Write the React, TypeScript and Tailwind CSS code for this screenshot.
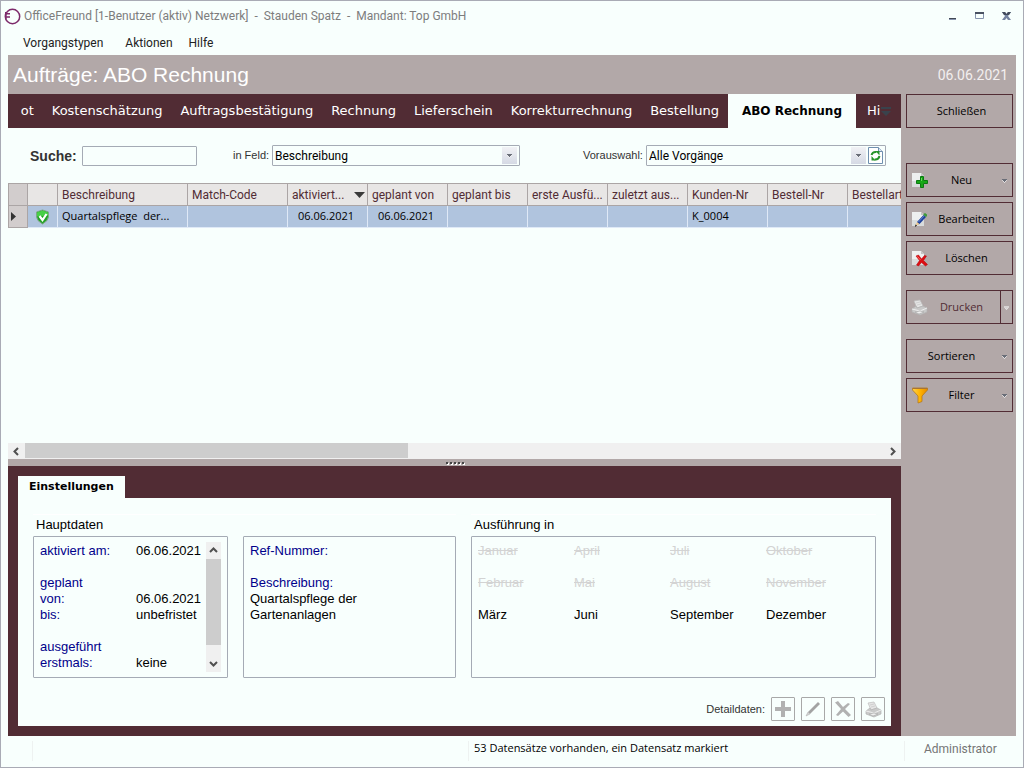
import { useState, type ReactNode } from "react";
import clsx from "clsx";

const tabs = [
  { name: "Angebot", label: "ot" },
  { name: "Kostenschätzung" },
  { name: "Auftragsbestätigung" },
  { name: "Rechnung" },
  { name: "Lieferschein" },
  { name: "Korrekturrechnung" },
  { name: "Bestellung" },
  { name: "ABO Rechnung" },
];

const columns = [
  { label: "Beschreibung", value: "Quartalspflege\u00a0 der..." },
  { label: "Match-Code", value: "" },
  { label: "aktiviert...", value: "06.06.2021", date: true, sorted: true },
  { label: "geplant von", value: "06.06.2021", date: true },
  { label: "geplant bis", value: "" },
  { label: "erste Ausfü...", value: "" },
  { label: "zuletzt aus...", value: "" },
  { label: "Kunden-Nr", value: "K_0004" },
  { label: "Bestell-Nr", value: "" },
  { label: "Bestellart", value: "" },
];

const months = [
  { name: "Januar", active: false },
  { name: "April", active: false },
  { name: "Juli", active: false },
  { name: "Oktober", active: false },
  { name: "Februar", active: false },
  { name: "Mai", active: false },
  { name: "August", active: false },
  { name: "November", active: false },
  { name: "März", active: true },
  { name: "Juni", active: true },
  { name: "September", active: true },
  { name: "Dezember", active: true },
];

const mainData = [
  ["aktiviert am:", "06.06.2021"],
  ["", ""],
  ["geplant", ""],
  ["von:", "06.06.2021"],
  ["bis:", "unbefristet"],
  ["", ""],
  ["ausgeführt", ""],
  ["erstmals:", "keine"],
];

const Logo = () => (
  <svg width="17" height="17" viewBox="0 0 17 17" fill="none" stroke="#7d2a6b">
    <circle cx="8.5" cy="8.5" r="7.2" strokeWidth="1.5" />
    <path d="M1 5.8h5M1 9h5" strokeWidth="1.4" />
    <path d="M1.8 4v7" strokeWidth="1.6" />
  </svg>
);

const Arrow = ({ className = "text-[#6a6e78]" }: { className?: string }) => (
  <svg width="7" height="5" viewBox="0 0 7 5" className={className}>
    <path d="M1 2h5L3.500 5z" fill="#f4f4f4" />
    <path d="M1 1h5v1H5v1H4v1H3V3H2V2H1z" fill="currentColor" />
  </svg>
);

const Page = () => (
  <>
    <path d="M1 1h9l3 3v11H1z" fill="#eef0f0" />
    <path d="M1 9h12v6H1z" fill="#d9dcdc" />
    <path d="M10 1v3h3z" fill="#c4c4c4" />
  </>
);

const NewIcon = () => (
  <svg width="17" height="17" viewBox="0 0 17 17">
    <Page />
    <path d="M9.500 4.500h3v4h4v3h-4v4h-3v-4h-4v-3h4z" fill="#17a817" stroke="#0b7a10" />
    <path d="M10 6h1v3h-1z" fill="#63dd55" />
  </svg>
);

const EditIcon = () => (
  <svg width="17" height="17" viewBox="0 0 17 17">
    <Page />
    <path d="M6 11l6.500-7 2.500 2-6.500 7-2 .5z" fill="#1d3f9b" />
    <path d="M7.500 11l6-6.500" stroke="#7798e0" strokeWidth=".8" />
    <path d="M12.500 3l1.500-1 2 1.500v1.500l-1 1-2.500-2z" fill="#3d9a3b" />
    <path d="M6 11l2.500 2-4 2z" fill="#efc88d" />
    <path d="M4.500 13.500l1.500 1-2 1.500z" fill="#111" />
  </svg>
);

const DeleteIcon = () => (
  <svg width="17" height="17" viewBox="0 0 17 17">
    <Page />
    <path
      d="M5 6l2.500-1 3 4 3-3.500 2 .5-3 4.500 4 4-2 1.500-4-3.500-3 3.500-2-1 3-4.500z"
      fill="#dd0d12"
      stroke="#b00008"
      strokeWidth=".5"
    />
    <path d="M6.500 6.500l3 3.500" stroke="#ff6a62" />
  </svg>
);

const PrinterIcon = () => (
  <svg width="17" height="17" viewBox="0 0 17 17">
    <path d="M3 2l6-1 3 6-6 2z" fill="#e5e5e5" stroke="#bdbdbd" strokeWidth=".7" />
    <path d="M5 4l4-1M6 6l4-1" stroke="#c5c5c5" strokeWidth=".7" />
    <path d="M1 10l4-3 1 2 6-2 4 2v4l-7 3-8-3z" fill="#c9c9c9" stroke="#b3b3b3" strokeWidth=".7" />
    <path d="M1 10l8 2 7-3" stroke="#eee" fill="none" />
    <path d="M4 13l5-1 4 1-5 2z" fill="#efefef" stroke="#a2a2a2" strokeWidth=".6" />
  </svg>
);

const FilterIcon = () => (
  <svg width="18" height="18" viewBox="0 0 18 18">
    <defs>
      <linearGradient id="funnel">
        <stop offset="0" stopColor="#ffd34a" />
        <stop offset=".5" stopColor="#ffb300" />
        <stop offset="1" stopColor="#e58a00" />
      </linearGradient>
    </defs>
    <path
      d="M1.500 2h15v2L11 10v5.500L7 17v-7L1.500 4z"
      fill="url(#funnel)"
      stroke="#b67a1a"
      strokeWidth=".8"
    />
    <path d="M2 2.500h14" stroke="#a87435" />
  </svg>
);

const ShieldIcon = () => (
  <svg width="15" height="16" viewBox="0 0 15 16">
    <path d="M7.500 1l6 2v4.500q0 4-6 7.500-6-3.500-6-7.500V3z" fill="#21a424" stroke="#7fa588" />
    <path d="M7.500 1.500l5.500 2v3l-11 1v-4z" fill="#48cf48" />
    <path d="M4.500 7l3 4 4-6" fill="none" stroke="#fff" strokeWidth="2.200" />
  </svg>
);

const RefreshIcon = () => (
  <svg width="15" height="17" viewBox="0 0 15 17">
    <path d="M.5.5h10l4 4v12H.5z" fill="#fff" stroke="#6f8fae" />
    <path d="M10.500.5v4h4" fill="#dce6ef" stroke="#6f8fae" />
    <path d="M3.500 8q1-3.500 5-3M11.500 9q-1 4-5 3.500" fill="none" stroke="#259329" strokeWidth="2" />
    <path d="M7.500 4h4v4.500zM7.500 13.500h-4V9z" fill="#259329" />
  </svg>
);

const Chevron = ({ d }: { d: string }) => (
  <svg width="9" height="9" viewBox="0 0 9 9" fill="none" stroke="#505050" strokeWidth="2">
    <path d={d} />
  </svg>
);

type SideButtonProps = {
  label: string;
  icon?: ReactNode;
  arrow?: boolean;
  className?: string;
};

const SideButton = ({ label, icon, arrow, className }: SideButtonProps) => (
  <button
    className={clsx(
      "flex h-[34px] w-full shrink-0 items-center border border-[#512c34] pl-1",
      className
    )}
  >
    {icon && <span className="w-5">{icon}</span>}
    <span className="flex-1 text-center">{label}</span>
    {arrow && (
      <span className="flex w-5 justify-end pr-1">
        <Arrow />
      </span>
    )}
    {icon && !arrow && <span className="w-2.5" />}
  </button>
);

const ComboArrow = () => (
  <span className="pointer-events-none flex h-[17px] w-[15px] shrink-0 items-center justify-center bg-gradient-to-b from-[#f1f2f5] to-[#d5d9e4]">
    <Arrow />
  </span>
);

const DetailButton = ({ label, children }: { label: string; children: ReactNode }) => (
  <button
    aria-label={label}
    className="flex size-6 items-center justify-center rounded-[1px] border border-[#a8a8a8]"
  >
    {children}
  </button>
);

const box = "h-[142px] rounded-[1px] border border-[#a5abb5]";

export default function App() {
  const [activeTab, setActiveTab] = useState("ABO Rechnung");

  return (
    <div className="flex min-h-screen flex-col border border-[#a9abb5] bg-[#f8fffd] font-[Roboto,sans-serif] text-xs text-black">
      {/* Titelleiste */}
      <header className="flex h-[30px] items-center pr-[11px] pl-[3px] text-[#7d7d7d]">
        <Logo />
        <h1 className="ml-[3px] flex-1 whitespace-pre">
          OfficeFreund [1-Benutzer (aktiv) Netzwerk]{"  -  "}Stauden Spatz{"  -  "}Mandant: Top GmbH
        </h1>
        <div className="flex items-center gap-4">
          <button aria-label="Minimieren">
            <svg width="11" height="11" viewBox="0 0 11 11">
              <path d="M2 7h7v1H2z" fill="#404754" />
              <path d="M2 8h7v1H2z" fill="#8794ae" />
            </svg>
          </button>
          <button aria-label="Maximieren">
            <svg width="11" height="11" viewBox="0 0 11 11">
              <path d="M1.500 1.500h8v6h-8z" fill="none" stroke="#8794ae" />
              <path d="M1 1h9v2H1z" fill="#4a5262" />
            </svg>
          </button>
          <button aria-label="Fenster schließen">
            <svg width="11" height="11" viewBox="0 0 11 11">
              <path d="M1 1h3l1.500 2L7 1h3L7 5l3 4H7L5.500 7 4 9H1l3-4z" fill="#7482a0" />
              <path d="M1 1h3l1.500 2L7 1h3L8 4H3z" fill="#434b5c" />
            </svg>
          </button>
        </div>
      </header>

      <nav className="flex h-6 items-center pl-[22px] text-[#222]">
        <button>Vorgangstypen</button>
        <button className="ml-[22px]">Aktionen</button>
        <button className="ml-4">Hilfe</button>
      </nav>

      <div className="mx-[7px] flex flex-1 flex-col">
        <div className="flex h-[39px] items-center justify-between bg-[#b2a8a8] pr-2 pl-[5px] text-white">
          <h2 className="font-['Liberation_Sans',sans-serif] text-[21px]">Aufträge: ABO Rechnung</h2>
          <time className="text-sm text-[#f3efef]">06.06.2021</time>
        </div>

        <div className="flex flex-1">
          <main className="flex min-w-0 flex-1 flex-col">
            {/* Vorgangstypen */}
            <div className="flex h-[34px] bg-[#512c34] pl-[5px] font-['DejaVu_Sans',sans-serif] text-[13px] text-white">
              <div className="flex min-w-0 flex-1 justify-end overflow-hidden" role="tablist">
                {tabs.map(({ name, label }) => (
                  <button
                    key={name}
                    role="tab"
                    aria-label={name}
                    aria-selected={name === activeTab}
                    onClick={() => setActiveTab(name)}
                    className={clsx(
                      "shrink-0 whitespace-nowrap",
                      name === activeTab
                        ? "bg-[#f8fffd] px-3.5 text-xs font-bold text-black"
                        : "px-[9px]"
                    )}
                  >
                    {label ?? name}
                  </button>
                ))}
              </div>
              <button className="w-[22px] pl-[11px] text-left">Hi</button>
              <button aria-label="Weitere Vorgangstypen" className="flex w-[23px] items-center pl-[3px]">
                <svg width="10" height="9" viewBox="0 0 10 9" fill="#39424c">
                  <path d="M0 0h10v2H0zM0 4h10L5 9z" />
                </svg>
              </button>
            </div>

            {/* Suche */}
            <div className="flex h-[55px] items-center pr-[15px] pl-[22px] text-[#333]">
              <label htmlFor="search" className="w-[52px] font-['Liberation_Sans',sans-serif] text-sm font-bold">
                Suche:
              </label>
              <input id="search" className="h-5 w-[115px] rounded-[1px] border border-[#a5abb5] bg-[#f8fffd] px-1" />
              <label htmlFor="field" className="ml-9 w-[39px] font-['Liberation_Sans',sans-serif] text-[11px]">
                in Feld:
              </label>
              <div className="flex h-[21px] w-[248px] items-center rounded-[1px] border border-[#a5abb5] pr-0.5 text-black">
                <select id="field" className="min-w-0 flex-1 appearance-none bg-transparent pl-0.5">
                  <option>Beschreibung</option>
                </select>
                <ComboArrow />
              </div>
              <label
                htmlFor="preset"
                className="ml-auto w-[63px] font-['Liberation_Sans',sans-serif] text-[11px]"
              >
                Vorauswahl:
              </label>
              <div className="flex h-[21px] w-[240px] items-center rounded-[1px] border border-[#a5abb5] pr-0.5 text-black">
                <select id="preset" className="min-w-0 flex-1 appearance-none bg-transparent pl-0.5">
                  <option>Alle Vorgänge</option>
                </select>
                <ComboArrow />
                <button aria-label="Aktualisieren" className="ml-0.5">
                  <RefreshIcon />
                </button>
              </div>
            </div>

            {/* Liste */}
            <div className="flex-1 overflow-hidden">
              <table className="w-[920px] table-fixed border-separate border-spacing-0 text-left whitespace-nowrap">
                <colgroup>
                  <col className="w-5" />
                  <col className="w-[30px]" />
                  <col className="w-[130px]" />
                  <col className="w-[100px]" />
                  <col span={8} className="w-20" />
                </colgroup>
                <thead>
                  <tr className="h-[23px] bg-[#e8e6e5] text-[#512c34]">
                    <th className="border border-[#aba5a5] bg-[#d2cdcd]" />
                    <th className="border-y border-r border-[#aba5a5]" />
                    {columns.map((col) => (
                      <th
                        key={col.label}
                        className="overflow-hidden border-y border-r border-[#aba5a5] p-0 pl-1 font-normal"
                      >
                        <span className="flex items-center justify-between pr-0.5">
                          {col.label}
                          {col.sorted && (
                            <svg width="11" height="6" viewBox="0 0 11 6" fill="#3a3a3a">
                              <path d="M0 0h11L5.500 6z" />
                            </svg>
                          )}
                        </span>
                      </th>
                    ))}
                  </tr>
                </thead>
                <tbody className="font-['Open_Sans',sans-serif] text-[11px]">
                  <tr className="h-[22px] bg-[#b0c4de]">
                    <td className="border-x border-b border-[#aba5a5] bg-[#d2cdcd] p-0 pl-0.5">
                      <svg width="6" height="9" viewBox="0 0 6 9" fill="#333">
                        <path d="M0 0l5 4.500L0 9z" />
                      </svg>
                    </td>
                    <td className="border-r border-b border-[#dfe9f7] p-0 pl-[7px]">
                      <ShieldIcon />
                    </td>
                    {columns.map((col) => (
                      <td
                        key={col.label}
                        className={clsx(
                          "overflow-hidden border-r border-b border-[#dfe9f7] p-0",
                          col.date ? "pl-2.5" : "pl-1"
                        )}
                      >
                        {col.value}
                      </td>
                    ))}
                  </tr>
                </tbody>
              </table>
            </div>

            <div className="flex h-4 items-center bg-[#f0f0f0]">
              <button aria-label="Nach links" className="flex w-[17px] justify-center">
                <Chevron d="M6 1L2.500 4.500 6 8" />
              </button>
              <div className="flex h-full flex-1">
                <div className="h-[15px] w-[383px] bg-[#cdcdcd]" />
              </div>
              <button aria-label="Nach rechts" className="flex w-[17px] justify-center">
                <Chevron d="M3 1l3.500 3.500L3 8" />
              </button>
            </div>
            <div className="flex h-[7px] items-center justify-center gap-0.5 bg-[#b2a8a8]">
              {[0, 1, 2, 3, 4].map((dot) => (
                <span key={dot} className="size-0.5 bg-[#444] shadow-[1px_1px_0_#fff]" />
              ))}
            </div>

            {/* Detailbereich */}
            <section className="bg-[#512c34] p-2.5">
              <div role="tablist" className="flex">
                <button
                  role="tab"
                  aria-selected
                  className="h-[22px] bg-[#f8fffd] px-[11px] font-['DejaVu_Sans',sans-serif] text-[11px] font-bold"
                >
                  Einstellungen
                </button>
              </div>
              <div className="bg-[#f8fffd] px-[15px] pt-4 pb-[5px] font-['Liberation_Sans',sans-serif] text-[13px] leading-4">
                <div className="flex gap-[15px]">
                  <div className="w-[423px] border-t border-white">
                    <h3 className="pt-0.5 pb-[3px] pl-[3px]">Hauptdaten</h3>
                    <div className="flex gap-[15px]">
                      <div className={clsx(box, "flex w-[195px] px-1.5 py-[5px]")}>
                        <dl className="flex-1 pt-px">
                          {mainData.map(([label, value], i) => (
                            <div key={i} className="flex h-4">
                              <dt className="w-24 text-[#00008b]">{label}</dt>
                              <dd>{value}</dd>
                            </div>
                          ))}
                        </dl>
                        <div className="flex w-[15px] flex-col bg-[#f0f0f0]">
                          <button aria-label="Nach oben" className="flex h-[17px] items-center justify-center">
                            <Chevron d="M1 6l3.500-3.500L8 6" />
                          </button>
                          <div className="flex-1">
                            <div className="h-[90%] bg-[#cdcdcd]" />
                          </div>
                          <button aria-label="Nach unten" className="flex h-[17px] items-center justify-center">
                            <Chevron d="M1 3l3.500 3.500L8 3" />
                          </button>
                        </div>
                      </div>
                      <div className={clsx(box, "flex-1 p-1.5")}>
                        <p className="text-[#00008b]">Ref-Nummer:</p>
                        <p className="mt-4 text-[#00008b]">Beschreibung:</p>
                        <p className="w-36">Quartalspflege der Gartenanlagen</p>
                      </div>
                    </div>
                  </div>
                  <div className="flex-1 border-t border-white">
                    <h3 className="pt-0.5 pb-[3px] pl-[3px]">Ausführung in</h3>
                    <ul className={clsx(box, "grid grid-cols-[repeat(4,96px)] content-start gap-y-4 p-1.5")}>
                      {months.map((month) => (
                        <li key={month.name} className={month.active ? "" : "text-[#d3d3d3] line-through"}>
                          {month.name}
                        </li>
                      ))}
                    </ul>
                  </div>
                </div>

                <div className="mt-[19px] -mr-[9px] flex items-center justify-end gap-1.5 text-[11px] text-[#333]">
                  Detaildaten:
                  <DetailButton label="Neu">
                    <svg width="18" height="18" viewBox="0 0 18 18">
                      <path d="M7 1h4v6h6v4h-6v6H7v-6H1V7h6z" fill="#b1b1b1" />
                    </svg>
                  </DetailButton>
                  <DetailButton label="Bearbeiten">
                    <svg width="18" height="18" viewBox="0 0 18 18">
                      <path d="M4 12L14 2l2 2L6 14z" fill="#a3a3a3" />
                      <path d="M4 12l2 2-4 2z" fill="#d0d0d0" stroke="#aaa" strokeWidth=".5" />
                    </svg>
                  </DetailButton>
                  <DetailButton label="Löschen">
                    <svg width="18" height="18" viewBox="0 0 18 18">
                      <path d="M1 2.500L4 1l5 6 5-4 2 1-5 5 6 6-2.500 2L9 11.500 4 16l-2-1 5-6z" fill="#b1b1b1" />
                    </svg>
                  </DetailButton>
                  <DetailButton label="Drucken">
                    <PrinterIcon />
                  </DetailButton>
                </div>
              </div>
            </section>
          </main>

          <aside className="flex w-[115px] shrink-0 flex-col bg-[#b2a8a8] pr-[3px] pl-[5px] font-['Open_Sans',sans-serif] text-[11px]">
            <SideButton label="Schließen" />
            <SideButton label="Neu" icon={<NewIcon />} arrow className="mt-[35px]" />
            <SideButton label="Bearbeiten" icon={<EditIcon />} className="mt-[5px]" />
            <SideButton label="Löschen" icon={<DeleteIcon />} className="mt-[5px]" />
            <div className="mt-[15px] flex h-[34px] border border-[#512c34] text-[#512c34]">
              <button className="flex flex-1 items-center pr-2 pl-1">
                <span className="w-5">
                  <PrinterIcon />
                </span>
                <span className="flex-1 text-center">Drucken</span>
              </button>
              <button
                aria-label="Druckoptionen"
                className="flex w-3 items-center justify-center border-l border-[#512c34]"
              >
                <Arrow className="text-[#d8d4d4]" />
              </button>
            </div>
            <SideButton label="Sortieren" arrow className="mt-[15px]" />
            <SideButton label="Filter" icon={<FilterIcon />} arrow className="mt-[5px]" />
          </aside>
        </div>
      </div>

      <footer className="flex h-[31px] pt-[5px] pl-[31px]">
        <div className="h-5 w-[436px] border-l border-[#eef2f1]" />
        <p className="h-5 flex-1 border-l border-[#eef2f1] pl-[5px] font-['Open_Sans',sans-serif] text-[11px]">
          53 Datensätze vorhanden, ein Datensatz markiert
        </p>
        <p className="h-5 w-[119px] border-l border-[#eef2f1] pl-[19px] text-[#757575]">Administrator</p>
      </footer>
    </div>
  );
}
